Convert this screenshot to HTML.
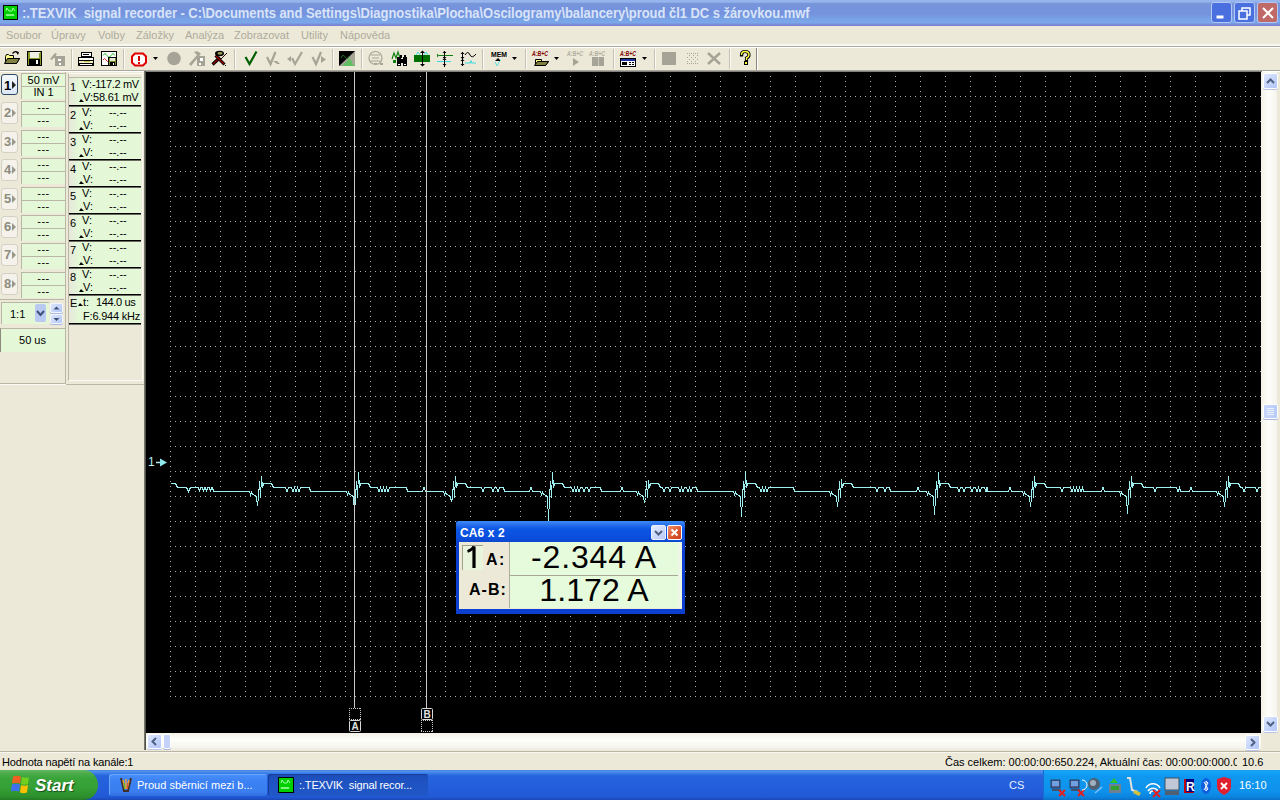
<!DOCTYPE html><html><head><meta charset="utf-8"><style>
*{margin:0;padding:0;box-sizing:border-box}
html,body{width:1280px;height:800px;overflow:hidden;background:#ece9d8;font-family:"Liberation Sans", sans-serif;position:relative}
.a{position:absolute}
.t{position:absolute;white-space:nowrap;line-height:1}
</style></head><body><div class="a" style="left:0;top:0;width:1280px;height:26px;background:linear-gradient(#96b4ee 0,#96b4ee 2px,#7896d8 3.5px,#7694dc 6px,#7592de 14px,#78a0e4 18px,#7aa8ea 22.5px,#7a8cd8 24.5px,#7a80d0 26px)"></div>

<div class="t" style="left:22px;top:6px;font-size:14px;font-weight:bold;letter-spacing:-0.06px;color:#d8e4f8;transform:scaleX(0.93);transform-origin:0 0">:.TEXVIK&nbsp; signal recorder - C:\Documents and Settings\Diagnostika\Plocha\Oscilogramy\balancery\proud čl1 DC s žárovkou.mwf</div>
<div class="a" style="left:1211px;top:2px;width:21px;height:21px;border:1px solid #b4c8f4;border-radius:3px;background:#4a6fde"></div>
<div class="a" style="left:1234px;top:2px;width:21px;height:21px;border:1px solid #b4c8f4;border-radius:3px;background:#4a6fde"></div>
<div class="a" style="left:1257px;top:2px;width:21px;height:21px;border:1px solid #b4c8f4;border-radius:3px;background:#c06a68"></div>
<div class="a" style="left:0;top:26px;width:1280px;height:19px;background:#ece9d8"></div>
<div class="t" style="left:6px;top:30px;font-size:11px;color:#aeab9c">Soubor</div>
<div class="t" style="left:51px;top:30px;font-size:11px;color:#aeab9c">Úpravy</div>
<div class="t" style="left:98px;top:30px;font-size:11px;color:#aeab9c">Volby</div>
<div class="t" style="left:136px;top:30px;font-size:11px;color:#aeab9c">Záložky</div>
<div class="t" style="left:185px;top:30px;font-size:11px;color:#aeab9c">Analýza</div>
<div class="t" style="left:234px;top:30px;font-size:11px;color:#aeab9c">Zobrazovat</div>
<div class="t" style="left:301px;top:30px;font-size:11px;color:#aeab9c">Utility</div>
<div class="t" style="left:340px;top:30px;font-size:11px;color:#aeab9c">Nápověda</div>
<div class="a" style="left:0;top:44px;width:1280px;height:2px;background:#f8f7f0"></div>
<div class="a" style="left:0;top:46px;width:1280px;height:1px;background:#aeac9e"></div>
<div class="a" style="left:0;top:47px;width:1280px;height:1px;background:#fff"></div>
<svg class="a" style="left:0;top:46px" width="760" height="25" viewBox="0 46 760 25"><rect x="71" y="49" width="1" height="20" fill="#c5c2b2"/><rect x="72" y="49" width="1" height="20" fill="#fbfaf6"/><rect x="123" y="49" width="1" height="20" fill="#c5c2b2"/><rect x="124" y="49" width="1" height="20" fill="#fbfaf6"/><rect x="234" y="49" width="1" height="20" fill="#c5c2b2"/><rect x="235" y="49" width="1" height="20" fill="#fbfaf6"/><rect x="332" y="49" width="1" height="20" fill="#c5c2b2"/><rect x="333" y="49" width="1" height="20" fill="#fbfaf6"/><rect x="361" y="49" width="1" height="20" fill="#c5c2b2"/><rect x="362" y="49" width="1" height="20" fill="#fbfaf6"/><rect x="482" y="49" width="1" height="20" fill="#c5c2b2"/><rect x="483" y="49" width="1" height="20" fill="#fbfaf6"/><rect x="525" y="49" width="1" height="20" fill="#c5c2b2"/><rect x="526" y="49" width="1" height="20" fill="#fbfaf6"/><rect x="613" y="49" width="1" height="20" fill="#c5c2b2"/><rect x="614" y="49" width="1" height="20" fill="#fbfaf6"/><rect x="654" y="49" width="1" height="20" fill="#c5c2b2"/><rect x="655" y="49" width="1" height="20" fill="#fbfaf6"/><rect x="729" y="49" width="1" height="20" fill="#c5c2b2"/><rect x="730" y="49" width="1" height="20" fill="#fbfaf6"/><rect x="756" y="48" width="1" height="22" fill="#8a887c"/><rect x="757" y="48" width="1" height="22" fill="#fff"/><path d="M5.5 56.5 V63.5 H16.5 L19.5 58.5 H13.5 V55.5 H9.5 L8.5 54.5 H6.5 Z" fill="#ffff80" stroke="#000" stroke-width="1" /><path d="M7.5 58.5 H19.5 L16.5 63.5 H4.5 Z" fill="#808040" stroke="#000" stroke-width="1" /><path d="M12.5 53.5 Q15 50.5 18 52.5" fill="none" stroke="#000" stroke-width="1.2" /><path d="M16 52 L19 52 L18 55 Z" fill="#000" stroke="none" stroke-width="1" /><rect x="27" y="51" width="15" height="15" fill="#000"/><rect x="28" y="52" width="13" height="13" fill="#8a9a28"/><rect x="30" y="52" width="9" height="6" fill="#f0f0e8"/><rect x="29" y="59" width="11" height="6" fill="#000"/><rect x="36" y="60" width="2" height="4" fill="#fff"/><rect x="39" y="52" width="1" height="1" fill="#fff"/><path d="M50 59 L55 53 L57 54 L52 60 Z" fill="#a6a496" stroke="none" stroke-width="1" /><rect x="55" y="56" width="10" height="10" fill="#a6a496"/><rect x="58" y="59" width="3" height="2" fill="#fff"/><rect x="59" y="63" width="2" height="2" fill="#fff"/><rect x="53" y="55" width="3" height="3" fill="#a6a496"/><rect x="81" y="52" width="11" height="5" fill="#000"/><rect x="82" y="53" width="9" height="3" fill="#fff"/><rect x="83" y="54" width="6" height="1" fill="#000"/><rect x="78" y="57" width="16" height="9" fill="#000"/><rect x="79" y="58" width="14" height="2" fill="#fff"/><rect x="79" y="61" width="14" height="2" fill="#f0f0c0"/><rect x="80" y="64" width="12" height="1" fill="#fff"/><rect x="84" y="61" width="6" height="1" fill="#c8c850"/><rect x="101" y="51" width="16" height="15" fill="#000"/><rect x="102" y="52" width="14" height="13" fill="#fff"/><path d="M103 55.5 Q105 52 107 55.5 Q109 59 111 55.5 Q113 52 115 55.5" fill="none" stroke="#30c030" stroke-width="1" /><path d="M103 60 Q104.5 57 106 60 Q107.5 63 109 60" fill="none" stroke="#e02020" stroke-width="1" /><rect x="108" y="57" width="9" height="9" fill="#000"/><rect x="109" y="58" width="7" height="7" fill="#7a8a30"/><rect x="110" y="58" width="5" height="3" fill="#e8e8d8"/><rect x="110" y="62" width="5" height="3" fill="#000"/><rect x="113" y="63" width="1" height="2" fill="#fff"/><path d="M135 53.5 H143 L146 56.5 V62.5 L143 65.5 H135 L132 62.5 V56.5 Z" fill="#fff" stroke="#e00000" stroke-width="2" /><rect x="138" y="56" width="2" height="5" fill="#d00000"/><rect x="138" y="62" width="2" height="2" fill="#d00000"/><path d="M153 57 H158 L155.5 60 Z" fill="#000" stroke="none" stroke-width="1" /><circle cx="174" cy="58.5" r="6.8" fill="#a6a496"/><path d="M189 64 L198 54 L200 55 L191 66 Z" fill="#a6a496" stroke="none" stroke-width="1" /><path d="M194 52 Q198 50 201 54 L198 56 Z" fill="#a6a496" stroke="none" stroke-width="1" /><rect x="197" y="56" width="8" height="10" fill="#a6a496"/><rect x="200" y="58" width="3" height="3" fill="#fff"/><rect x="199" y="63" width="2" height="2" fill="#fff"/><path d="M212.5 64.5 L220 57.5" fill="none" stroke="#000" stroke-width="3.2" /><path d="M213 64 L220 57.5" fill="none" stroke="#900000" stroke-width="1.2" /><path d="M215.5 55.5 L224.5 64.5" fill="none" stroke="#000" stroke-width="3" /><path d="M216 56 L224 64" fill="none" stroke="#a00000" stroke-width="1.2" /><ellipse cx="219.5" cy="53.5" rx="4.5" ry="2.8" fill="#000"/><ellipse cx="220" cy="53.3" rx="2.6" ry="1.4" fill="#a09858"/><path d="M221 59 L227 53" fill="none" stroke="#300000" stroke-width="1" /><rect x="225" y="65" width="1" height="1" fill="#000"/><path d="M245.5 57 L249.5 64 L256.5 51.5" fill="none" stroke="#006000" stroke-width="2.2" /><path d="M267 57 L270.5 64 L275.5 52" fill="none" stroke="#a6a496" stroke-width="2.2" /><path d="M273 61 L277 64 H280 L277 61 Z" fill="#a6a496" stroke="none" stroke-width="1" /><path d="M292 58 L295 64 L302 52" fill="none" stroke="#a6a496" stroke-width="2.2" /><path d="M287 59 L291 56 V62 Z" fill="#a6a496" stroke="none" stroke-width="1" /><path d="M312.5 57 L316 64 L321 52" fill="none" stroke="#a6a496" stroke-width="2.2" /><path d="M321 56 L326 59.5 L321 63 Z" fill="#a6a496" stroke="none" stroke-width="1" /><rect x="339" y="51" width="16" height="15" fill="#a6a496"/><path d="M339 51 H355 L339 66 Z" fill="#000" stroke="none" stroke-width="1" /><path d="M341 58 Q343 53 345 57 Q347 61 349 56" fill="none" stroke="#1a6a1a" stroke-width="1" /><path d="M345 66 L355 56 V66 Z" fill="#a8a898" stroke="none" stroke-width="1" /><path d="M342 66 L350 58 L353 65 H355 V66 Z" fill="#60c060" stroke="none" stroke-width="1" /><circle cx="375.5" cy="58" r="6.5" fill="none" stroke="#a6a496" stroke-width="1.2"/><path d="M371 55 H380 M372 58 H379 M371 61 H380 M374 63.5 H377" fill="none" stroke="#a6a496" stroke-width="1" /><rect x="380" y="63" width="3" height="2" fill="#a6a496"/><path d="M392 59 L394 53 L396 58 L398 52 L400 58" fill="none" stroke="#108010" stroke-width="1.2" /><rect x="393" y="60" width="3" height="3" fill="#108010"/><rect x="397" y="57" width="4" height="9" fill="#000"/><rect x="403" y="57" width="4" height="9" fill="#000"/><rect x="397" y="59" width="10" height="4" fill="#000"/><rect x="400" y="55" width="2" height="3" fill="#000"/><rect x="404" y="55" width="2" height="2" fill="#000"/><rect x="398" y="64" width="2" height="1" fill="#fff"/><rect x="404" y="64" width="2" height="1" fill="#fff"/><rect x="414" y="55" width="16" height="7" fill="#007000"/><path d="M416 55 L418 52 L420 55 M424 55 L426 52 L428 55" fill="none" stroke="#40e0e0" stroke-width="1" /><rect x="422" y="51" width="1" height="15" fill="#000"/><path d="M420 53 L422.5 50.5 L425 53 Z M420 64 L422.5 66.5 L425 64 Z" fill="#000" stroke="none" stroke-width="1" /><rect x="439" y="55" width="14" height="1" fill="#108010"/><path d="M437 53.5 L439 55.5 L437 57.5 Z" fill="#108010" stroke="none" stroke-width="1" /><rect x="437" y="61" width="14" height="1" fill="#40d8e0"/><rect x="444" y="51" width="1" height="16" fill="#000"/><path d="M442.5 53 L444.5 51 L446.5 53 Z M442.5 57 L444.5 59 L446.5 57 Z M442.5 60 L444.5 58 L446.5 60 Z M442.5 64 L444.5 66 L446.5 64 Z" fill="#000" stroke="none" stroke-width="1" /><rect x="462" y="52" width="1" height="14" fill="#000"/><path d="M460.5 54 L462.5 52 L464.5 54 Z M460.5 57 L462.5 59 L464.5 57 Z M460.5 61 L462.5 59 L464.5 61 Z M460.5 64 L462.5 66 L464.5 64 Z" fill="#000" stroke="none" stroke-width="1" /><path d="M465 55 Q468 50 470 55 Q472 59 476 54" fill="none" stroke="#000" stroke-width="1" /><path d="M465 63 H470 L471 61 L472 63 H476" fill="none" stroke="#40d8e0" stroke-width="1.2" /><text x="491" y="57" font-family="Liberation Sans" font-weight="bold" font-size="8" fill="#000" textLength="16" lengthAdjust="spacingAndGlyphs">MEM</text><path d="M495 61 L498 58 L501 61 Z" fill="#000" stroke="none" stroke-width="1" /><path d="M495 62 L497 66 L499 62 L501 60" fill="none" stroke="#60e0e0" stroke-width="1" /><path d="M512 57 H517 L514.5 60 Z" fill="#000" stroke="none" stroke-width="1" /><text x="532" y="56" font-family="Liberation Sans" font-weight="bold" font-style="italic" font-size="8" fill="#800000" textLength="16" lengthAdjust="spacingAndGlyphs">A:B+C</text><path d="M535.5 59.5 V65.5 H545.5 L548.5 61.5 H541.5 V59.5 Z" fill="#ffff80" stroke="#000" stroke-width="1" /><path d="M537.5 61.5 H548.5 L545.5 65.5 H534.5 Z" fill="#808040" stroke="#000" stroke-width="1" /><path d="M554 57 H559 L556.5 60 Z" fill="#000" stroke="none" stroke-width="1" /><text x="567" y="56" font-family="Liberation Sans" font-weight="bold" font-style="italic" font-size="8" fill="#b0ae9f" textLength="16" lengthAdjust="spacingAndGlyphs">A:B+C</text><path d="M573 58 L579 62 L573 66 Z" fill="#a6a496" stroke="none" stroke-width="1" /><text x="589" y="56" font-family="Liberation Sans" font-weight="bold" font-style="italic" font-size="8" fill="#b0ae9f" textLength="16" lengthAdjust="spacingAndGlyphs">A:B+C</text><rect x="592" y="57" width="12" height="9" fill="#a6a496"/><rect x="598" y="57" width="1" height="9" fill="#c8c6b8"/><text x="620" y="56" font-family="Liberation Sans" font-weight="bold" font-style="italic" font-size="8" fill="#800000" textLength="16" lengthAdjust="spacingAndGlyphs">A:B+C</text><rect x="620" y="58" width="16" height="9" fill="#000"/><rect x="621" y="59" width="14" height="2" fill="#2030a0"/><rect x="621" y="61" width="14" height="5" fill="#fff"/><rect x="622" y="62" width="5" height="3" fill="#000"/><rect x="629" y="62" width="2" height="1" fill="#000"/><rect x="632" y="62" width="2" height="1" fill="#000"/><rect x="629" y="64" width="2" height="1" fill="#000"/><rect x="632" y="64" width="2" height="1" fill="#000"/><path d="M642 57 H647 L644.5 60 Z" fill="#000" stroke="none" stroke-width="1" /><rect x="662" y="52" width="14" height="13" fill="#a6a496"/><rect x="687" y="53" width="1" height="1" fill="#a8a698"/><rect x="689" y="53" width="1" height="1" fill="#a8a698"/><rect x="691" y="53" width="1" height="1" fill="#a8a698"/><rect x="693" y="53" width="1" height="1" fill="#a8a698"/><rect x="695" y="53" width="1" height="1" fill="#a8a698"/><rect x="697" y="53" width="1" height="1" fill="#a8a698"/><rect x="689" y="55" width="1" height="1" fill="#a8a698"/><rect x="693" y="55" width="1" height="1" fill="#a8a698"/><rect x="697" y="55" width="1" height="1" fill="#a8a698"/><rect x="687" y="57" width="1" height="1" fill="#a8a698"/><rect x="691" y="57" width="1" height="1" fill="#a8a698"/><rect x="695" y="57" width="1" height="1" fill="#a8a698"/><rect x="689" y="59" width="1" height="1" fill="#a8a698"/><rect x="693" y="59" width="1" height="1" fill="#a8a698"/><rect x="697" y="59" width="1" height="1" fill="#a8a698"/><rect x="687" y="61" width="1" height="1" fill="#a8a698"/><rect x="691" y="61" width="1" height="1" fill="#a8a698"/><rect x="695" y="61" width="1" height="1" fill="#a8a698"/><rect x="687" y="63" width="1" height="1" fill="#a8a698"/><rect x="689" y="63" width="1" height="1" fill="#a8a698"/><rect x="691" y="63" width="1" height="1" fill="#a8a698"/><rect x="693" y="63" width="1" height="1" fill="#a8a698"/><rect x="695" y="63" width="1" height="1" fill="#a8a698"/><rect x="697" y="63" width="1" height="1" fill="#a8a698"/><path d="M708 53 L720 64 M720 53 L708 64" fill="none" stroke="#a6a496" stroke-width="2.5" /><path d="M741.5 55 Q741.5 51.5 745 51.5 Q749 51.5 749 55 Q749 57 746.5 58 V60" fill="none" stroke="#000" stroke-width="3.2" stroke-linecap="square"/><path d="M741.5 55 Q741.5 51.5 745 51.5 Q749 51.5 749 55 Q749 57 746.5 58 V60" fill="none" stroke="#ffff40" stroke-width="1.4" /><rect x="744" y="61" width="4" height="4" fill="#000"/><rect x="745" y="62" width="2" height="2" fill="#ffff40"/></svg>
<div class="a" style="left:0;top:70px;width:1280px;height:1px;background:#aca899"></div>
<div class="a" style="left:0;top:71px;width:1280px;height:1px;background:#fff"></div>
<div class="a" style="left:144px;top:71px;width:1118px;height:663px;background:#808080"></div>
<svg class="a" style="left:146px;top:72px" width="1115" height="661" viewBox="146 72 1115 661">
<defs>
<pattern id="pv" x="170" y="76" width="25" height="5" patternUnits="userSpaceOnUse"><rect width="1" height="1" fill="#acacac"/></pattern>
<pattern id="ph" x="170" y="96" width="5" height="25" patternUnits="userSpaceOnUse"><rect width="1" height="1" fill="#acacac"/></pattern>
</defs>
<rect x="146" y="72" width="1115" height="661" fill="#000"/>
<rect x="170" y="76" width="1076" height="621" fill="url(#pv)"/>
<rect x="170" y="96" width="1091" height="601" fill="url(#ph)"/>
<path d="M170.5 483.5 L175.5 483.5 L177.5 487.5 L186.5 487.5 L188.5 491.5 L190.5 487.5 L196.5 487.5 L198.5 487.5 L199.5 491.5 L200.5 487.5 L202.5 487.5 L203.5 491.5 L204.5 487.5 L205.5 487.5 L206.5 491.5 L207.5 487.5 L209.5 487.5 L210.5 491.5 L211.5 487.5 L212.5 487.5 L213.5 491.5 L249.5 491.5 L250.5 494.5 L251.5 492.5 L252.5 494.5 L255.5 495.5 L256.5 497.5 L257.5 505.5 L258.5 497.5 L259.5 481.5 L260.5 497.5 L261.5 476.5 L262.5 487.5 L263.5 483.5 L271.5 483.5 L273.5 487.5 L275.5 487.5 L282.5 487.5 L285.5 487.5 L287.0 491.5 L288.5 487.5 L288.5 487.5 L291.5 487.5 L293.0 491.5 L294.5 487.5 L294.5 487.5 L296.0 491.5 L297.5 487.5 L297.5 487.5 L299.0 491.5 L300.5 487.5 L300.5 487.5 L302.5 487.5 L309.5 487.5 L310.5 491.5 L346.5 491.5 L347.5 494.5 L348.5 492.5 L349.5 494.5 L352.5 495.5 L353.5 497.5 L354.5 512.5 L355.5 497.5 L356.5 481.5 L357.5 497.5 L358.5 472.5 L359.5 487.5 L360.5 483.5 L368.5 483.5 L370.5 487.5 L372.5 487.5 L375.5 487.5 L377.5 487.5 L379.0 491.5 L380.5 487.5 L380.5 487.5 L382.0 491.5 L383.5 487.5 L383.5 487.5 L385.0 491.5 L386.5 487.5 L386.5 487.5 L388.0 491.5 L389.5 487.5 L389.5 487.5 L396.5 487.5 L399.5 487.5 L404.5 487.5 L406.5 487.5 L407.5 491.5 L422.5 491.5 L424.0 487.5 L425.5 491.5 L443.5 491.5 L444.5 494.5 L445.5 492.5 L446.5 494.5 L449.5 495.5 L450.5 497.5 L451.5 501.5 L452.5 497.5 L453.5 481.5 L454.5 497.5 L455.5 476.5 L456.5 487.5 L457.5 483.5 L465.5 483.5 L467.5 487.5 L469.5 487.5 L471.5 487.5 L476.5 487.5 L481.5 487.5 L483.0 491.5 L484.5 487.5 L484.5 487.5 L486.5 487.5 L491.5 487.5 L493.0 491.5 L494.5 487.5 L494.5 487.5 L496.5 487.5 L498.0 491.5 L499.5 487.5 L499.5 487.5 L501.5 487.5 L503.5 487.5 L504.5 491.5 L529.5 491.5 L531.0 487.5 L532.5 491.5 L540.5 491.5 L541.5 494.5 L542.5 492.5 L543.5 494.5 L546.5 495.5 L547.5 497.5 L548.5 520.5 L549.5 497.5 L550.5 481.5 L551.5 497.5 L552.5 472.5 L553.5 487.5 L554.5 483.5 L562.5 483.5 L564.5 487.5 L566.5 487.5 L571.5 487.5 L573.0 491.5 L574.5 487.5 L574.5 487.5 L576.0 491.5 L577.5 487.5 L577.5 487.5 L579.0 491.5 L580.5 487.5 L580.5 487.5 L582.5 487.5 L584.0 491.5 L585.5 487.5 L585.5 487.5 L587.5 487.5 L589.0 491.5 L590.5 487.5 L590.5 487.5 L593.5 487.5 L596.5 487.5 L599.5 487.5 L600.5 487.5 L601.5 491.5 L620.5 491.5 L622.0 487.5 L623.5 491.5 L636.5 491.5 L637.5 494.5 L638.5 492.5 L639.5 494.5 L642.5 495.5 L643.5 497.5 L644.5 502.5 L645.5 497.5 L646.5 481.5 L647.5 497.5 L648.5 480.5 L649.5 487.5 L650.5 483.5 L658.5 483.5 L660.5 487.5 L662.5 487.5 L664.0 491.5 L665.5 487.5 L665.5 487.5 L668.5 487.5 L670.0 491.5 L671.5 487.5 L671.5 487.5 L676.5 487.5 L678.5 487.5 L680.0 491.5 L681.5 487.5 L681.5 487.5 L683.0 491.5 L684.5 487.5 L684.5 487.5 L686.5 487.5 L688.0 491.5 L689.5 487.5 L689.5 487.5 L691.0 491.5 L692.5 487.5 L692.5 487.5 L694.5 487.5 L696.5 487.5 L697.5 491.5 L733.5 491.5 L734.5 494.5 L735.5 492.5 L736.5 494.5 L739.5 495.5 L740.5 497.5 L741.5 516.5 L742.5 497.5 L743.5 481.5 L744.5 497.5 L745.5 471.5 L746.5 487.5 L747.5 483.5 L755.5 483.5 L757.5 487.5 L759.5 487.5 L761.0 491.5 L762.5 487.5 L762.5 487.5 L764.0 491.5 L765.5 487.5 L765.5 487.5 L767.0 491.5 L768.5 487.5 L768.5 487.5 L770.5 487.5 L775.5 487.5 L778.5 487.5 L785.5 487.5 L788.5 487.5 L791.5 487.5 L793.5 487.5 L794.5 491.5 L829.5 491.5 L830.5 494.5 L831.5 492.5 L832.5 494.5 L835.5 495.5 L836.5 497.5 L837.5 506.5 L838.5 497.5 L839.5 481.5 L840.5 497.5 L841.5 479.5 L842.5 487.5 L843.5 483.5 L851.5 483.5 L853.5 487.5 L855.5 487.5 L858.5 487.5 L861.5 487.5 L864.5 487.5 L871.5 487.5 L873.5 487.5 L875.5 487.5 L877.0 491.5 L878.5 487.5 L878.5 487.5 L883.5 487.5 L885.0 491.5 L886.5 487.5 L886.5 487.5 L889.5 487.5 L890.5 491.5 L916.5 491.5 L918.0 487.5 L919.5 491.5 L926.5 491.5 L927.5 494.5 L928.5 492.5 L929.5 494.5 L932.5 495.5 L933.5 497.5 L934.5 514.5 L935.5 497.5 L936.5 481.5 L937.5 497.5 L938.5 472.5 L939.5 487.5 L940.5 483.5 L948.5 483.5 L950.5 487.5 L952.5 487.5 L955.5 487.5 L957.5 487.5 L959.0 491.5 L960.5 487.5 L960.5 487.5 L962.5 487.5 L964.0 491.5 L965.5 487.5 L965.5 487.5 L968.5 487.5 L970.5 487.5 L972.0 491.5 L973.5 487.5 L973.5 487.5 L975.5 487.5 L977.0 491.5 L978.5 487.5 L978.5 487.5 L980.0 491.5 L981.5 487.5 L981.5 487.5 L984.5 487.5 L986.0 491.5 L987.5 487.5 L986.5 487.5 L987.5 491.5 L1008.5 491.5 L1010.0 487.5 L1011.5 491.5 L1022.5 491.5 L1023.5 494.5 L1024.5 492.5 L1025.5 494.5 L1028.5 495.5 L1029.5 497.5 L1030.5 506.5 L1031.5 497.5 L1032.5 481.5 L1033.5 497.5 L1034.5 476.5 L1035.5 487.5 L1036.5 483.5 L1044.5 483.5 L1046.5 487.5 L1048.5 487.5 L1051.5 487.5 L1053.5 487.5 L1058.5 487.5 L1060.5 487.5 L1062.0 491.5 L1063.5 487.5 L1063.5 487.5 L1070.5 487.5 L1072.0 491.5 L1073.5 487.5 L1073.5 487.5 L1075.0 491.5 L1076.5 487.5 L1076.5 487.5 L1078.0 491.5 L1079.5 487.5 L1079.5 487.5 L1081.0 491.5 L1082.5 487.5 L1082.5 487.5 L1083.5 491.5 L1101.5 491.5 L1103.0 487.5 L1104.5 491.5 L1119.5 491.5 L1120.5 494.5 L1121.5 492.5 L1122.5 494.5 L1125.5 495.5 L1126.5 497.5 L1127.5 513.5 L1128.5 497.5 L1129.5 481.5 L1130.5 497.5 L1131.5 476.5 L1132.5 487.5 L1133.5 483.5 L1141.5 483.5 L1143.5 487.5 L1145.5 487.5 L1148.5 487.5 L1153.5 487.5 L1155.0 491.5 L1156.5 487.5 L1156.5 487.5 L1158.5 487.5 L1165.5 487.5 L1167.5 487.5 L1169.5 487.5 L1176.5 487.5 L1178.0 491.5 L1179.5 487.5 L1179.5 487.5 L1180.5 491.5 L1189.5 491.5 L1191.0 487.5 L1192.5 491.5 L1216.5 491.5 L1217.5 494.5 L1218.5 492.5 L1219.5 494.5 L1222.5 495.5 L1223.5 497.5 L1224.5 506.5 L1225.5 497.5 L1226.5 481.5 L1227.5 497.5 L1228.5 476.5 L1229.5 487.5 L1230.5 483.5 L1238.5 483.5 L1240.5 487.5 L1242.5 487.5 L1244.0 491.5 L1245.5 487.5 L1245.5 487.5 L1250.5 487.5 L1255.5 487.5 L1257.0 491.5 L1258.5 487.5 L1258.5 487.5 L1261.5 487.5" fill="none" stroke="#9ff0f0" stroke-width="1" shape-rendering="crispEdges"/>
</svg>
<div class="a" style="left:0;top:72px;width:144px;height:678px;background:#ece9d8"></div>
<div class="a" style="left:144px;top:71px;width:2px;height:680px;background:linear-gradient(90deg,#8c8a7c,#3c3c38)"></div>
<div class="a" style="left:1px;top:74px;width:17px;height:21px;border:1px solid #2c4a64;border-radius:3px;background:linear-gradient(#f4f8fc,#dce8f4)"></div>
<div class="t" style="left:4px;top:79px;font-size:13px;font-weight:bold;color:#000">1</div>
<div class="a" style="left:12px;top:81px;width:0;height:0;border-left:4px solid #222;border-top:4px solid transparent;border-bottom:4px solid transparent"></div>
<div class="a" style="left:21px;top:73px;width:44px;height:26px;background:#e4f8d8;border-left:1px solid #b9b6a6;border-top:1px solid #b9b6a6"></div>
<div class="a" style="left:21px;top:86px;width:44px;height:1px;background:#b9b6a6"></div>
<div class="t" style="left:22px;width:43px;text-align:center;top:75px;font-size:11px;color:#000">50 mV</div>
<div class="t" style="left:22px;width:43px;text-align:center;top:87px;font-size:11px;color:#000">IN 1</div>
<div class="a" style="left:1px;top:102px;width:17px;height:22px;border:1px solid #d4d1c4;border-radius:3px;background:#f4f2ea"></div>
<div class="t" style="left:4px;top:106px;font-size:13px;font-weight:bold;color:#8e8c7e">2</div>
<div class="a" style="left:12px;top:109px;width:0;height:0;border-left:4px solid #9a988a;border-top:4px solid transparent;border-bottom:4px solid transparent"></div>
<div class="a" style="left:21px;top:101px;width:44px;height:26px;background:#e4f8d8;border-left:1px solid #b9b6a6;border-top:1px solid #b9b6a6"></div>
<div class="a" style="left:21px;top:114px;width:44px;height:1px;background:#b9b6a6"></div>
<div class="t" style="left:22px;width:43px;text-align:center;top:102px;font-size:11px;color:#000;letter-spacing:0.5px">---</div>
<div class="t" style="left:22px;width:43px;text-align:center;top:115px;font-size:11px;color:#000;letter-spacing:0.5px">---</div>
<div class="a" style="left:1px;top:131px;width:17px;height:22px;border:1px solid #d4d1c4;border-radius:3px;background:#f4f2ea"></div>
<div class="t" style="left:4px;top:135px;font-size:13px;font-weight:bold;color:#8e8c7e">3</div>
<div class="a" style="left:12px;top:138px;width:0;height:0;border-left:4px solid #9a988a;border-top:4px solid transparent;border-bottom:4px solid transparent"></div>
<div class="a" style="left:21px;top:130px;width:44px;height:26px;background:#e4f8d8;border-left:1px solid #b9b6a6;border-top:1px solid #b9b6a6"></div>
<div class="a" style="left:21px;top:143px;width:44px;height:1px;background:#b9b6a6"></div>
<div class="t" style="left:22px;width:43px;text-align:center;top:131px;font-size:11px;color:#000;letter-spacing:0.5px">---</div>
<div class="t" style="left:22px;width:43px;text-align:center;top:144px;font-size:11px;color:#000;letter-spacing:0.5px">---</div>
<div class="a" style="left:1px;top:159px;width:17px;height:22px;border:1px solid #d4d1c4;border-radius:3px;background:#f4f2ea"></div>
<div class="t" style="left:4px;top:163px;font-size:13px;font-weight:bold;color:#8e8c7e">4</div>
<div class="a" style="left:12px;top:166px;width:0;height:0;border-left:4px solid #9a988a;border-top:4px solid transparent;border-bottom:4px solid transparent"></div>
<div class="a" style="left:21px;top:158px;width:44px;height:26px;background:#e4f8d8;border-left:1px solid #b9b6a6;border-top:1px solid #b9b6a6"></div>
<div class="a" style="left:21px;top:171px;width:44px;height:1px;background:#b9b6a6"></div>
<div class="t" style="left:22px;width:43px;text-align:center;top:159px;font-size:11px;color:#000;letter-spacing:0.5px">---</div>
<div class="t" style="left:22px;width:43px;text-align:center;top:172px;font-size:11px;color:#000;letter-spacing:0.5px">---</div>
<div class="a" style="left:1px;top:188px;width:17px;height:22px;border:1px solid #d4d1c4;border-radius:3px;background:#f4f2ea"></div>
<div class="t" style="left:4px;top:192px;font-size:13px;font-weight:bold;color:#8e8c7e">5</div>
<div class="a" style="left:12px;top:195px;width:0;height:0;border-left:4px solid #9a988a;border-top:4px solid transparent;border-bottom:4px solid transparent"></div>
<div class="a" style="left:21px;top:187px;width:44px;height:26px;background:#e4f8d8;border-left:1px solid #b9b6a6;border-top:1px solid #b9b6a6"></div>
<div class="a" style="left:21px;top:200px;width:44px;height:1px;background:#b9b6a6"></div>
<div class="t" style="left:22px;width:43px;text-align:center;top:188px;font-size:11px;color:#000;letter-spacing:0.5px">---</div>
<div class="t" style="left:22px;width:43px;text-align:center;top:201px;font-size:11px;color:#000;letter-spacing:0.5px">---</div>
<div class="a" style="left:1px;top:216px;width:17px;height:22px;border:1px solid #d4d1c4;border-radius:3px;background:#f4f2ea"></div>
<div class="t" style="left:4px;top:220px;font-size:13px;font-weight:bold;color:#8e8c7e">6</div>
<div class="a" style="left:12px;top:223px;width:0;height:0;border-left:4px solid #9a988a;border-top:4px solid transparent;border-bottom:4px solid transparent"></div>
<div class="a" style="left:21px;top:215px;width:44px;height:26px;background:#e4f8d8;border-left:1px solid #b9b6a6;border-top:1px solid #b9b6a6"></div>
<div class="a" style="left:21px;top:228px;width:44px;height:1px;background:#b9b6a6"></div>
<div class="t" style="left:22px;width:43px;text-align:center;top:216px;font-size:11px;color:#000;letter-spacing:0.5px">---</div>
<div class="t" style="left:22px;width:43px;text-align:center;top:229px;font-size:11px;color:#000;letter-spacing:0.5px">---</div>
<div class="a" style="left:1px;top:244px;width:17px;height:22px;border:1px solid #d4d1c4;border-radius:3px;background:#f4f2ea"></div>
<div class="t" style="left:4px;top:248px;font-size:13px;font-weight:bold;color:#8e8c7e">7</div>
<div class="a" style="left:12px;top:251px;width:0;height:0;border-left:4px solid #9a988a;border-top:4px solid transparent;border-bottom:4px solid transparent"></div>
<div class="a" style="left:21px;top:243px;width:44px;height:26px;background:#e4f8d8;border-left:1px solid #b9b6a6;border-top:1px solid #b9b6a6"></div>
<div class="a" style="left:21px;top:256px;width:44px;height:1px;background:#b9b6a6"></div>
<div class="t" style="left:22px;width:43px;text-align:center;top:244px;font-size:11px;color:#000;letter-spacing:0.5px">---</div>
<div class="t" style="left:22px;width:43px;text-align:center;top:257px;font-size:11px;color:#000;letter-spacing:0.5px">---</div>
<div class="a" style="left:1px;top:273px;width:17px;height:22px;border:1px solid #d4d1c4;border-radius:3px;background:#f4f2ea"></div>
<div class="t" style="left:4px;top:277px;font-size:13px;font-weight:bold;color:#8e8c7e">8</div>
<div class="a" style="left:12px;top:280px;width:0;height:0;border-left:4px solid #9a988a;border-top:4px solid transparent;border-bottom:4px solid transparent"></div>
<div class="a" style="left:21px;top:272px;width:44px;height:26px;background:#e4f8d8;border-left:1px solid #b9b6a6;border-top:1px solid #b9b6a6"></div>
<div class="a" style="left:21px;top:285px;width:44px;height:1px;background:#b9b6a6"></div>
<div class="t" style="left:22px;width:43px;text-align:center;top:273px;font-size:11px;color:#000;letter-spacing:0.5px">---</div>
<div class="t" style="left:22px;width:43px;text-align:center;top:286px;font-size:11px;color:#000;letter-spacing:0.5px">---</div>
<div class="a" style="left:0;top:299px;width:64px;height:1px;background:#b9b6a6"></div>
<div class="a" style="left:1px;top:302px;width:48px;height:22px;background:#e4f8d8;border-left:1px solid #b9b6a6;border-top:1px solid #b9b6a6"></div>
<div class="t" style="left:10px;top:309px;font-size:11px;color:#000">1:1</div>
<div class="a" style="left:35px;top:304px;width:11px;height:18px;background:#b9c9f2;border-radius:2px"></div>
<svg class="a" style="left:35px;top:304px" width="11" height="18"><path d="M2 7 L5.5 11 L9 7" stroke="#3c5078" stroke-width="2" fill="none"/></svg>
<div class="a" style="left:50px;top:303px;width:13px;height:10px;background:linear-gradient(135deg,#dce6fc,#b4c6f4);border-radius:2px;border:1px solid #f4f6fe;box-shadow:0 1px 0 #a8b8e0"></div>
<div class="a" style="left:50px;top:314px;width:13px;height:10px;background:linear-gradient(135deg,#dce6fc,#b4c6f4);border-radius:2px;border:1px solid #f4f6fe;box-shadow:0 1px 0 #a8b8e0"></div>
<svg class="a" style="left:50px;top:303px" width="12" height="20"><path d="M3.5 6.5 L6.5 3.5 L9.5 6.5 Z M3.5 15 L6.5 18 L9.5 15 Z" fill="#3c5078"/></svg>
<div class="a" style="left:0;top:328px;width:65px;height:24px;background:#e4f8d8;border-top:1px solid #b9b6a6;border-left:1px solid #8c8a7c"></div>
<div class="t" style="left:0;width:65px;text-align:center;top:335px;font-size:11px;color:#000">50 us</div>
<div class="a" style="left:65px;top:72px;width:1px;height:312px;background:#b9b6a6"></div>
<div class="a" style="left:0;top:383px;width:66px;height:1px;background:#b9b6a6"></div>
<div class="a" style="left:0;top:384px;width:66px;height:1px;background:#fbfaf4"></div>
<div class="a" style="left:68px;top:73px;width:75px;height:308px;border-left:1px solid #b9b6a6;border-top:1px solid #fbfaf4;border-right:1px solid #fbfaf4;border-bottom:1px solid #fbfaf4"></div>
<div class="a" style="left:66px;top:384px;width:78px;height:1px;background:#b9b6a6"></div>
<div class="a" style="left:68px;top:77px;width:73px;height:247px;background:#e4f8d8;border-left:1px solid #b9b6a6;border-top:1px solid #b9b6a6"></div>
<div class="a" style="left:69px;top:78px;width:8px;height:245px;background:linear-gradient(90deg,#e8e8da,#e4f4d8)"></div>
<div class="a" style="left:69px;top:105px;width:72px;height:1px;background:#000"></div>
<div class="a" style="left:69px;top:106px;width:72px;height:1px;background:#6a6a60"></div>
<div class="a" style="left:69px;top:132px;width:72px;height:1px;background:#000"></div>
<div class="a" style="left:69px;top:133px;width:72px;height:1px;background:#6a6a60"></div>
<div class="a" style="left:69px;top:159px;width:72px;height:1px;background:#000"></div>
<div class="a" style="left:69px;top:160px;width:72px;height:1px;background:#6a6a60"></div>
<div class="a" style="left:69px;top:186px;width:72px;height:1px;background:#000"></div>
<div class="a" style="left:69px;top:187px;width:72px;height:1px;background:#6a6a60"></div>
<div class="a" style="left:69px;top:213px;width:72px;height:1px;background:#000"></div>
<div class="a" style="left:69px;top:214px;width:72px;height:1px;background:#6a6a60"></div>
<div class="a" style="left:69px;top:240px;width:72px;height:1px;background:#000"></div>
<div class="a" style="left:69px;top:241px;width:72px;height:1px;background:#6a6a60"></div>
<div class="a" style="left:69px;top:267px;width:72px;height:1px;background:#000"></div>
<div class="a" style="left:69px;top:268px;width:72px;height:1px;background:#6a6a60"></div>
<div class="a" style="left:69px;top:294px;width:72px;height:1px;background:#000"></div>
<div class="a" style="left:69px;top:295px;width:72px;height:1px;background:#6a6a60"></div>
<div class="a" style="left:69px;top:323px;width:72px;height:1px;background:#000"></div>
<div class="a" style="left:69px;top:324px;width:72px;height:1px;background:#6a6a60"></div>
<div class="t" style="left:70px;top:82px;font-size:11px;color:#000">1</div>
<div class="t" style="left:82px;top:79px;font-size:11px;color:#000">V:</div>
<div class="t" style="left:83px;top:92px;font-size:11px;color:#000">V:</div>
<div class="a" style="left:79px;top:99px;width:0;height:0;border-bottom:3px solid #000;border-left:2px solid transparent;border-right:3px solid transparent"></div>
<div class="t" style="left:92px;top:79px;font-size:11px;color:#000;letter-spacing:-0.35px">-117.2 mV</div>
<div class="t" style="left:93px;top:92px;font-size:11px;color:#000;letter-spacing:-0.2px">58.61 mV</div>
<div class="t" style="left:70px;top:110px;font-size:11px;color:#000">2</div>
<div class="t" style="left:82px;top:107px;font-size:11px;color:#000">V:</div>
<div class="t" style="left:83px;top:120px;font-size:11px;color:#000">V:</div>
<div class="a" style="left:79px;top:127px;width:0;height:0;border-bottom:3px solid #000;border-left:2px solid transparent;border-right:3px solid transparent"></div>
<div class="t" style="left:109px;top:107px;font-size:11px;color:#000">--.--</div>
<div class="t" style="left:109px;top:120px;font-size:11px;color:#000">--.--</div>
<div class="t" style="left:70px;top:137px;font-size:11px;color:#000">3</div>
<div class="t" style="left:82px;top:134px;font-size:11px;color:#000">V:</div>
<div class="t" style="left:83px;top:147px;font-size:11px;color:#000">V:</div>
<div class="a" style="left:79px;top:154px;width:0;height:0;border-bottom:3px solid #000;border-left:2px solid transparent;border-right:3px solid transparent"></div>
<div class="t" style="left:109px;top:134px;font-size:11px;color:#000">--.--</div>
<div class="t" style="left:109px;top:147px;font-size:11px;color:#000">--.--</div>
<div class="t" style="left:70px;top:164px;font-size:11px;color:#000">4</div>
<div class="t" style="left:82px;top:161px;font-size:11px;color:#000">V:</div>
<div class="t" style="left:83px;top:174px;font-size:11px;color:#000">V:</div>
<div class="a" style="left:79px;top:181px;width:0;height:0;border-bottom:3px solid #000;border-left:2px solid transparent;border-right:3px solid transparent"></div>
<div class="t" style="left:109px;top:161px;font-size:11px;color:#000">--.--</div>
<div class="t" style="left:109px;top:174px;font-size:11px;color:#000">--.--</div>
<div class="t" style="left:70px;top:191px;font-size:11px;color:#000">5</div>
<div class="t" style="left:82px;top:188px;font-size:11px;color:#000">V:</div>
<div class="t" style="left:83px;top:201px;font-size:11px;color:#000">V:</div>
<div class="a" style="left:79px;top:208px;width:0;height:0;border-bottom:3px solid #000;border-left:2px solid transparent;border-right:3px solid transparent"></div>
<div class="t" style="left:109px;top:188px;font-size:11px;color:#000">--.--</div>
<div class="t" style="left:109px;top:201px;font-size:11px;color:#000">--.--</div>
<div class="t" style="left:70px;top:218px;font-size:11px;color:#000">6</div>
<div class="t" style="left:82px;top:215px;font-size:11px;color:#000">V:</div>
<div class="t" style="left:83px;top:228px;font-size:11px;color:#000">V:</div>
<div class="a" style="left:79px;top:235px;width:0;height:0;border-bottom:3px solid #000;border-left:2px solid transparent;border-right:3px solid transparent"></div>
<div class="t" style="left:109px;top:215px;font-size:11px;color:#000">--.--</div>
<div class="t" style="left:109px;top:228px;font-size:11px;color:#000">--.--</div>
<div class="t" style="left:70px;top:245px;font-size:11px;color:#000">7</div>
<div class="t" style="left:82px;top:242px;font-size:11px;color:#000">V:</div>
<div class="t" style="left:83px;top:255px;font-size:11px;color:#000">V:</div>
<div class="a" style="left:79px;top:262px;width:0;height:0;border-bottom:3px solid #000;border-left:2px solid transparent;border-right:3px solid transparent"></div>
<div class="t" style="left:109px;top:242px;font-size:11px;color:#000">--.--</div>
<div class="t" style="left:109px;top:255px;font-size:11px;color:#000">--.--</div>
<div class="t" style="left:70px;top:272px;font-size:11px;color:#000">8</div>
<div class="t" style="left:82px;top:269px;font-size:11px;color:#000">V:</div>
<div class="t" style="left:83px;top:282px;font-size:11px;color:#000">V:</div>
<div class="a" style="left:79px;top:289px;width:0;height:0;border-bottom:3px solid #000;border-left:2px solid transparent;border-right:3px solid transparent"></div>
<div class="t" style="left:109px;top:269px;font-size:11px;color:#000">--.--</div>
<div class="t" style="left:109px;top:282px;font-size:11px;color:#000">--.--</div>
<div class="t" style="left:70px;top:298px;font-size:11px;color:#000">E</div>
<div class="t" style="left:83px;top:297px;font-size:11px;color:#000">t:</div>
<div class="a" style="left:78px;top:303px;width:0;height:0;border-bottom:3px solid #000;border-left:2px solid transparent;border-right:3px solid transparent"></div>
<div class="t" style="left:96px;top:297px;font-size:11px;letter-spacing:-0.35px;color:#000">144.0 us</div>
<div class="t" style="left:83px;top:311px;font-size:11px;color:#000;letter-spacing:-0.2px">F:6.944 kHz</div>
<div class="a" style="left:0;top:750px;width:1280px;height:20px;background:#ece9d8"></div>
<div class="a" style="left:0;top:751px;width:1280px;height:1px;background:#b8b5a6"></div>
<div class="a" style="left:0;top:752px;width:1280px;height:1px;background:#f8f7f0"></div>
<div class="t" style="left:2px;top:757px;font-size:11px;letter-spacing:-0.15px;color:#000">Hodnota napětí na kanále:1</div>
<div class="a" style="left:945px;top:752px;width:292px;height:17px;overflow:hidden"><div class="t" style="left:0;top:5px;font-size:11px;color:#000">Čas celkem: 00:00:00:650.224, Aktuální čas: 00:00:00:000.0</div></div>
<div class="t" style="left:1242px;top:757px;font-size:11px;color:#000">10.6</div>
<svg class="a" style="left:3px;top:5px" width="16" height="16"><rect x="0.5" y="0.5" width="14" height="14" fill="#00d000" stroke="#000"/><path d="M3 6 L4 3 L6 6 H9 L10 3 L12 6 M3 11 L4 9 L5 11 L6 9 L7 11 L8 9 L9 11 L10 9 L11 11" stroke="#a0ffa0" fill="none" stroke-width="1"/></svg>
<svg class="a" style="left:1211px;top:2px" width="67" height="22"><rect x="5.5" y="13.5" width="7" height="3" fill="#fff"/><rect x="28" y="9" width="8" height="8" fill="none" stroke="#fff" stroke-width="1.5"/><path d="M31 9 V6 H39 V13 H36" fill="none" stroke="#fff" stroke-width="1.5"/><path d="M52 6 L62 16 M62 6 L52 16" stroke="#fff" stroke-width="2"/></svg>
<div class="a" style="left:1261px;top:72px;width:19px;height:661px;background:linear-gradient(90deg,#f3f1e6,#fefefb 40%,#f6f5ee 80%,#eeede5)"></div>
<div class="a" style="left:1277px;top:72px;width:3px;height:661px;background:#ece9d8"></div>
<div class="a" style="left:1263px;top:73px;width:15px;height:16px;border-radius:2px;border:1px solid #fff;box-shadow:0 1px 0 #b8c4e4;background:linear-gradient(135deg,#dfe8fd,#c2d2fa 60%,#b4c6f6)"></div>
<svg class="a" style="left:1263px;top:73px" width="15" height="16"><path d="M4 10 L7.5 6.5 L11 10" stroke="#4d6185" stroke-width="2" fill="none"/></svg>
<div class="a" style="left:1263px;top:716px;width:15px;height:16px;border-radius:2px;border:1px solid #fff;box-shadow:0 1px 0 #b8c4e4;background:linear-gradient(135deg,#dfe8fd,#c2d2fa 60%,#b4c6f6)"></div>
<svg class="a" style="left:1263px;top:716px" width="15" height="16"><path d="M4 6 L7.5 9.5 L11 6" stroke="#4d6185" stroke-width="2" fill="none"/></svg>
<div class="a" style="left:1263px;top:404px;width:15px;height:15px;border-radius:2px;border:1px solid #fff;box-shadow:0 1px 0 #a8b4d8;background:linear-gradient(90deg,#c8d6fc,#b8cbf8)"></div>
<svg class="a" style="left:1263px;top:404px" width="15" height="15"><path d="M4 4.5 H11 M4 6.5 H11 M4 8.5 H11 M4 10.5 H11" stroke="#eef2fe" stroke-width="1"/></svg>
<div class="a" style="left:146px;top:733px;width:1115px;height:17px;background:linear-gradient(#f3f1e6,#fefefb 40%,#f6f5ee 80%,#eeede5)"></div>
<div class="a" style="left:147px;top:734px;width:15px;height:15px;border-radius:2px;border:1px solid #fff;box-shadow:0 1px 0 #b8c4e4;background:linear-gradient(135deg,#dfe8fd,#c2d2fa 60%,#b4c6f6)"></div>
<svg class="a" style="left:147px;top:734px" width="15" height="15"><path d="M9 4 L5.5 7.5 L9 11" stroke="#4d6185" stroke-width="2" fill="none"/></svg>
<div class="a" style="left:163px;top:734px;width:8px;height:15px;border-radius:2px;border:1px solid #fff;box-shadow:0 1px 0 #a8b4d8;background:#c4d2fa"></div>
<div class="a" style="left:1245px;top:735px;width:15px;height:15px;border-radius:2px;border:1px solid #fff;box-shadow:0 1px 0 #b8c4e4;background:linear-gradient(135deg,#dfe8fd,#c2d2fa 60%,#b4c6f6)"></div>
<svg class="a" style="left:1245px;top:735px" width="15" height="15"><path d="M6 4 L9.5 7.5 L6 11" stroke="#4d6185" stroke-width="2" fill="none"/></svg>
<div class="a" style="left:1261px;top:733px;width:19px;height:17px;background:#ece9d8"></div>
<svg class="a" style="left:340px;top:72px" width="100" height="661" viewBox="340 72 100 661"><rect x="354" y="72" width="1" height="636" fill="#c8c8c8"/><rect x="426" y="72" width="1" height="636" fill="#c8c8c8"/><rect x="349" y="708" width="1" height="1" fill="#c8c8c8"/><rect x="349" y="719" width="1" height="1" fill="#c8c8c8"/><rect x="351" y="708" width="1" height="1" fill="#c8c8c8"/><rect x="351" y="719" width="1" height="1" fill="#c8c8c8"/><rect x="349" y="710" width="1" height="1" fill="#c8c8c8"/><rect x="360" y="710" width="1" height="1" fill="#c8c8c8"/><rect x="353" y="708" width="1" height="1" fill="#c8c8c8"/><rect x="353" y="719" width="1" height="1" fill="#c8c8c8"/><rect x="349" y="712" width="1" height="1" fill="#c8c8c8"/><rect x="360" y="712" width="1" height="1" fill="#c8c8c8"/><rect x="355" y="708" width="1" height="1" fill="#c8c8c8"/><rect x="355" y="719" width="1" height="1" fill="#c8c8c8"/><rect x="349" y="714" width="1" height="1" fill="#c8c8c8"/><rect x="360" y="714" width="1" height="1" fill="#c8c8c8"/><rect x="357" y="708" width="1" height="1" fill="#c8c8c8"/><rect x="357" y="719" width="1" height="1" fill="#c8c8c8"/><rect x="349" y="716" width="1" height="1" fill="#c8c8c8"/><rect x="360" y="716" width="1" height="1" fill="#c8c8c8"/><rect x="359" y="708" width="1" height="1" fill="#c8c8c8"/><rect x="359" y="719" width="1" height="1" fill="#c8c8c8"/><rect x="349" y="718" width="1" height="1" fill="#c8c8c8"/><rect x="360" y="718" width="1" height="1" fill="#c8c8c8"/><rect x="360" y="708" width="1" height="1" fill="#c8c8c8"/><rect x="360" y="719" width="1" height="1" fill="#c8c8c8"/><rect x="349.5" y="720.5" width="11" height="11" rx="1" fill="none" stroke="#d8d8d8"/><text x="355" y="730" text-anchor="middle" font-family="Liberation Sans" font-weight="bold" font-size="10" fill="#e0e0e0">A</text><rect x="421.5" y="708.5" width="11" height="11" rx="1" fill="none" stroke="#d8d8d8"/><text x="427" y="718" text-anchor="middle" font-family="Liberation Sans" font-weight="bold" font-size="10" fill="#e0e0e0">B</text><rect x="421" y="720" width="1" height="1" fill="#c8c8c8"/><rect x="421" y="731" width="1" height="1" fill="#c8c8c8"/><rect x="423" y="720" width="1" height="1" fill="#c8c8c8"/><rect x="423" y="731" width="1" height="1" fill="#c8c8c8"/><rect x="421" y="722" width="1" height="1" fill="#c8c8c8"/><rect x="432" y="722" width="1" height="1" fill="#c8c8c8"/><rect x="425" y="720" width="1" height="1" fill="#c8c8c8"/><rect x="425" y="731" width="1" height="1" fill="#c8c8c8"/><rect x="421" y="724" width="1" height="1" fill="#c8c8c8"/><rect x="432" y="724" width="1" height="1" fill="#c8c8c8"/><rect x="427" y="720" width="1" height="1" fill="#c8c8c8"/><rect x="427" y="731" width="1" height="1" fill="#c8c8c8"/><rect x="421" y="726" width="1" height="1" fill="#c8c8c8"/><rect x="432" y="726" width="1" height="1" fill="#c8c8c8"/><rect x="429" y="720" width="1" height="1" fill="#c8c8c8"/><rect x="429" y="731" width="1" height="1" fill="#c8c8c8"/><rect x="421" y="728" width="1" height="1" fill="#c8c8c8"/><rect x="432" y="728" width="1" height="1" fill="#c8c8c8"/><rect x="431" y="720" width="1" height="1" fill="#c8c8c8"/><rect x="431" y="731" width="1" height="1" fill="#c8c8c8"/><rect x="421" y="730" width="1" height="1" fill="#c8c8c8"/><rect x="432" y="730" width="1" height="1" fill="#c8c8c8"/><rect x="432" y="720" width="1" height="1" fill="#c8c8c8"/><rect x="432" y="731" width="1" height="1" fill="#c8c8c8"/></svg>
<div class="t" style="left:148px;top:456px;font-size:12px;color:#b8f0f0">1</div>
<svg class="a" style="left:155px;top:457px" width="14" height="10"><path d="M1 5.5 H6" stroke="#b0ecec" stroke-width="1.5"/><path d="M5 1.5 L12 5.5 L5 9.5 Z" fill="#8ee8ee"/></svg>
<div class="a" style="left:456px;top:521px;width:229px;height:93px;background:#0a3fd0;border-radius:3px 3px 0 0"></div>
<div class="a" style="left:456px;top:521px;width:229px;height:21px;border-radius:3px 3px 0 0;background:linear-gradient(#3a8cf8 0,#2d74ec 3px,#0c56e4 8px,#0a4fde 16px,#0c48d0 21px)"></div>
<div class="t" style="left:460px;top:527px;font-size:12px;font-weight:bold;color:#fff;letter-spacing:0.1px">CA6 x 2</div>
<div class="a" style="left:651px;top:525px;width:15px;height:15px;border-radius:2px;border:1px solid #e8f0ff;background:linear-gradient(135deg,#e4ecfe,#b9c9f6)"></div>
<svg class="a" style="left:651px;top:525px" width="15" height="15"><path d="M4 6 L7.5 9.5 L11 6" stroke="#4d6185" stroke-width="2" fill="none"/></svg>
<div class="a" style="left:667px;top:525px;width:15px;height:15px;border-radius:2px;border:1px solid #fff;background:linear-gradient(135deg,#f09070,#d8542c 60%,#c84020)"></div>
<svg class="a" style="left:667px;top:525px" width="15" height="15"><path d="M4.5 4.5 L10.5 10.5 M10.5 4.5 L4.5 10.5" stroke="#fff" stroke-width="2"/></svg>
<div class="a" style="left:459px;top:542px;width:223px;height:67px;background:#ece9d8"></div>
<div class="a" style="left:462px;top:545px;width:21px;height:25px;background:#e8f4dc;border-left:1px solid #a0a090;border-top:1px solid #a0a090"></div>
<svg class="a" style="left:462px;top:545px" width="21" height="25"><path d="M12 1.5 V23" stroke="#000" stroke-width="3.2" fill="none"/><path d="M5.5 6.5 Q10 5 12 1.5" stroke="#000" stroke-width="2.6" fill="none"/></svg>
<div class="t" style="left:486px;top:552px;font-size:16px;font-weight:bold;color:#000;letter-spacing:1.5px">A:</div>
<div class="t" style="left:469px;top:582px;font-size:16px;font-weight:bold;color:#000;letter-spacing:1px">A-B:</div>
<div class="a" style="left:509px;top:542px;width:173px;height:66px;background:#e6fadc;border-left:1px solid #b0ae9e"></div>
<div class="a" style="left:510px;top:575px;width:168px;height:1px;background:#a8a696"></div>
<div class="a" style="left:678px;top:542px;width:4px;height:66px;background:#eef6e8"></div>
<div class="t" style="left:509px;width:170px;text-align:center;top:541px;font-size:32px;letter-spacing:0.85px;color:#000">-2.344 A</div>
<div class="t" style="left:509px;width:170px;text-align:center;top:574px;font-size:32px;letter-spacing:0.15px;color:#000">1.172 A</div>
<div class="a" style="left:0;top:770px;width:1280px;height:30px;background:linear-gradient(#3a75d8 0,#5796ee 1px,#3c7fe8 3px,#2663dc 6px,#245edc 60%,#2158d4 90%,#1a48b8 100%)"></div>
<div class="a" style="left:0;top:770px;width:98px;height:30px;border-radius:0 14px 14px 0 / 0 15px 15px 0;background:linear-gradient(#66b866 0,#4cae4c 3px,#3aa43a 8px,#35a035 60%,#2c8e2c 90%,#247a24 100%)"></div>
<svg class="a" style="left:10px;top:775px" width="20" height="19"><path d="M3 1.5 Q7 0 11 1.8 L10 8.5 Q6.5 7 2 8.5 Z" fill="#f06020"/><path d="M12 2 Q15.5 3.5 19 2.3 L18 9 Q14.5 10.5 11 9 Z" fill="#70d020"/><path d="M1.8 9.5 Q6 8 10 9.5 L9 16.5 Q5 15 1 16.5 Z" fill="#4070f0"/><path d="M11 10 Q14.5 11.5 18 10 L17 17.5 Q13.5 19 10 17.5 Z" fill="#f8c000"/></svg>
<div class="t" style="left:35px;top:777px;font-size:17px;font-weight:bold;font-style:italic;color:#fff;text-shadow:1px 1px 1px #1a4a1a">Start</div>
<div class="a" style="left:109px;top:774px;width:158px;height:22px;border-radius:3px;background:linear-gradient(#4a90f8,#3c82f4 30%,#3a7ef0 80%,#3070e0);box-shadow:inset 1px 1px 0 #6aa8ff"></div>
<svg class="a" style="left:119px;top:776px" width="14" height="17"><path d="M2 2 L5 15 H9 L12 2" stroke="#40302a" stroke-width="2" fill="none"/><path d="M4 4 L6 13 M7 3 L7 13 M10 4 L8 13" stroke="#f0a030" stroke-width="1.5"/><path d="M5 7 L6 13" stroke="#40c040" stroke-width="1"/><path d="M9 7 L8 13" stroke="#d04040" stroke-width="1"/></svg>
<div class="t" style="left:137px;top:780px;font-size:11px;color:#fff">Proud sběrnicí mezi b...</div>
<div class="a" style="left:268px;top:774px;width:160px;height:22px;border-radius:3px;background:linear-gradient(#1c4cb8,#1e52c0 30%,#2058c8);box-shadow:inset 1px 1px 0 #143c98"></div>
<svg class="a" style="left:278px;top:777px" width="16" height="16"><rect x="0.5" y="0.5" width="15" height="15" fill="#00d000" stroke="#000"/><path d="M3 6 L4 3 L6 6 H9 L10 3 L12 6 M3 12 L4 10 L5 12 L6 10 L7 12 L8 10 L9 12 L10 10 L11 12" stroke="#a0ffa0" fill="none" stroke-width="1"/></svg>
<div class="t" style="left:299px;top:780px;font-size:11px;color:#fff;letter-spacing:-0.15px">:.TEXVIK&nbsp; signal recor...</div>
<div class="a" style="left:1043px;top:770px;width:237px;height:30px;border-left:1px solid #1a6ad0;background:linear-gradient(#1aa0f4 0,#14a4f8 2px,#0f98f0 6px,#0e92ec 70%,#0c84e0 90%,#0a70c8)"></div>
<div class="t" style="left:1009px;top:780px;font-size:11px;color:#e8f0ff">CS</div>
<div class="t" style="left:1239px;top:780px;font-size:11px;color:#fff">16:10</div>
<svg class="a" style="left:0;top:0" width="1280" height="800" viewBox="0 0 1280 800" pointer-events="none"><rect x="1051" y="780" width="9" height="8" fill="#506090" stroke="#203050" stroke-width="0.8"/><rect x="1052" y="781" width="7" height="5" fill="#70a0e0"/><rect x="1052" y="789" width="9" height="2" fill="#405070"/><path d="M1059 790 L1065 796 M1065 790 L1059 796" stroke="#e02020" stroke-width="2"/><rect x="1070" y="780" width="9" height="8" fill="#506090" stroke="#203050" stroke-width="0.8"/><rect x="1071" y="781" width="7" height="5" fill="#70a0e0"/><rect x="1071" y="789" width="9" height="2" fill="#405070"/><path d="M1078 790 L1084 796 M1084 790 L1078 796" stroke="#e02020" stroke-width="2"/><path d="M1082 780 A3 3 0 0 1 1082 790" stroke="#fff" stroke-width="1" fill="none"/><circle cx="1094" cy="784" r="6" fill="#506070"/><circle cx="1093" cy="783" r="3" fill="#a0b0c0"/><path d="M1095 793 L1102 787" stroke="#80c0ff" stroke-width="1.5"/><rect x="1109" y="784" width="12" height="9" fill="#708090"/><path d="M1110 783 L1114 778 L1118 783 Z" fill="#30c030"/><rect x="1111" y="786" width="8" height="4" fill="#30a030"/><path d="M1127 778 L1130 778 L1132 790 L1138 792" stroke="#e0e0e0" stroke-width="2" fill="none"/><path d="M1135 790 L1141 793 L1139 796 L1133 793 Z" fill="#d0c040"/><path d="M1146 788 A8 8 0 0 1 1160 788 M1148 791 A6 6 0 0 1 1158 791 M1150 794 A3 3 0 0 1 1156 794" stroke="#fff" stroke-width="1.5" fill="none"/><path d="M1153 790 L1160 797 M1160 790 L1153 797" stroke="#e02020" stroke-width="2"/><rect x="1165" y="778" width="14" height="12" fill="#c0c8d8" stroke="#405060"/><rect x="1165" y="791" width="14" height="4" fill="#506070"/><rect x="1184" y="779" width="10" height="14" fill="#c00000"/><rect x="1186" y="779" width="8" height="13" fill="#000080"/><text x="1186" y="791" font-family="Liberation Sans" font-weight="bold" font-size="12" fill="#fff">R</text><ellipse cx="1206" cy="786" rx="5" ry="8" fill="#1060e0"/><path d="M1204 782 L1208 789 L1206 791 V781 L1208 783 L1204 790" stroke="#fff" stroke-width="1" fill="none"/><path d="M1217 779 L1224 777 L1231 779 V786 Q1231 792 1224 795 Q1217 792 1217 786 Z" fill="#e02030"/><path d="M1221 783 L1227 789 M1227 783 L1221 789" stroke="#fff" stroke-width="1.8"/></svg></body></html>
